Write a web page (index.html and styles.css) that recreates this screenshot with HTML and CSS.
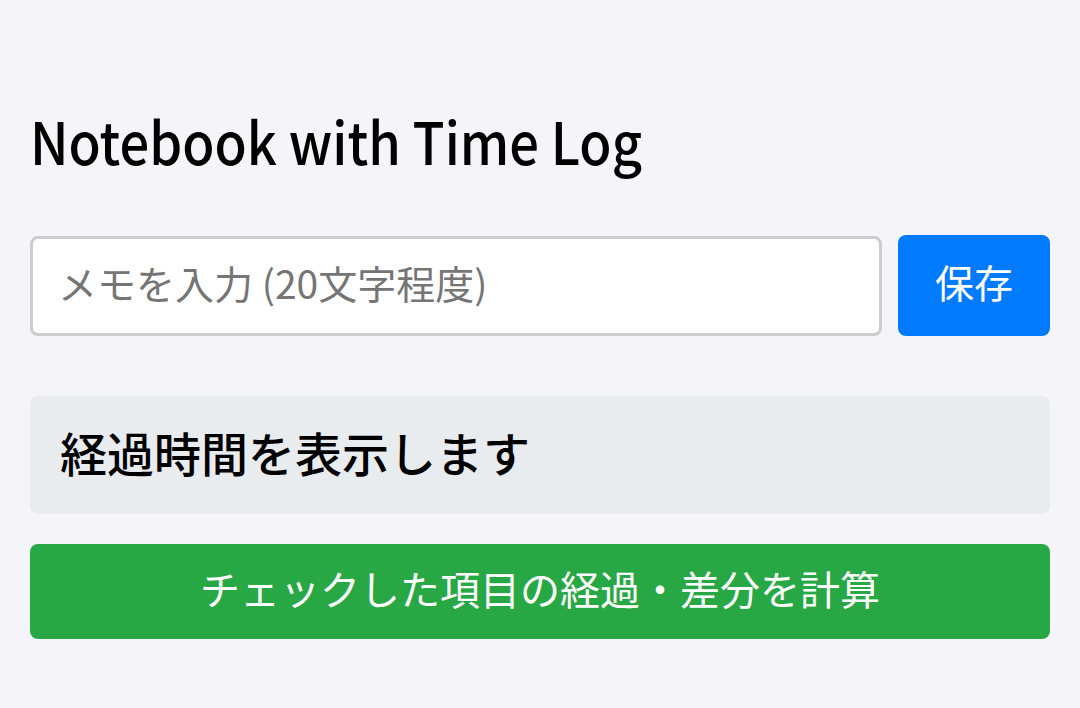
FILE: index.html
```html
<!DOCTYPE html>
<html lang="ja">
<head>
  <meta charset="UTF-8">
  <title>Notebook with Time Log</title>
  <link rel="stylesheet" href="styles.css">
</head>
<body>

  <div class="app">
    <h1>Notebook with Time Log</h1>

    <form class="memo-form" id="memoForm">
      <input type="text" id="memoInput" placeholder="メモを入力 (20文字程度)">
      <button type="submit" class="save">保存</button>
    </form>

    <div class="elapsed" id="elapsed">経過時間を表示します</div>

    <button type="button" class="calc" id="calcBtn">チェックした項目の経過・差分を計算</button>
  </div>

</body>
</html>
```

FILE: styles.css
```css
* {
  box-sizing: border-box;
  font-family: "Noto Sans CJK JP", "Noto Sans", sans-serif;
}

body {
  margin: 0;
  background-color: #f4f4f9;
  color: #000;
}

.app {
  padding: 0 30px;
}

h1 {
  margin: 0;
  padding-top: 111px;
  font-size: 58px;
  font-weight: 500;
  line-height: 58px;
  transform: scaleX(0.905);
  transform-origin: left center;
}

.memo-form {
  display: flex;
  gap: 16px;
  margin-top: 67px;
}

.memo-form input {
  flex: 1;
  height: 100px;
  padding: 0 25px 8px;
  font-size: 39px;
  line-height: 1;
  border: 3px solid #ccc;
  border-radius: 8px;
  background: #fff;
  outline: none;
}

.memo-form input::placeholder {
  color: #757575;
}

.save {
  width: 152px;
  height: 101px;
  margin-top: -1px;
  padding: 0 0 8px;
  border: none;
  border-radius: 8px;
  background-color: #007bff;
  color: #fff;
  font-size: 39px;
  line-height: 1;
  cursor: pointer;
}

.elapsed {
  display: flex;
  align-items: center;
  height: 118px;
  margin-top: 60px;
  padding: 0 30px 8px;
  background-color: #e9ecef;
  border-radius: 8px;
  font-size: 47px;
  font-weight: 500;
  line-height: 1;
}

.calc {
  display: block;
  width: 100%;
  height: 95px;
  margin-top: 30px;
  padding: 0 0 8px;
  border: none;
  border-radius: 8px;
  background-color: #28a745;
  color: #fff;
  font-size: 40px;
  line-height: 1;
  cursor: pointer;
}
```
